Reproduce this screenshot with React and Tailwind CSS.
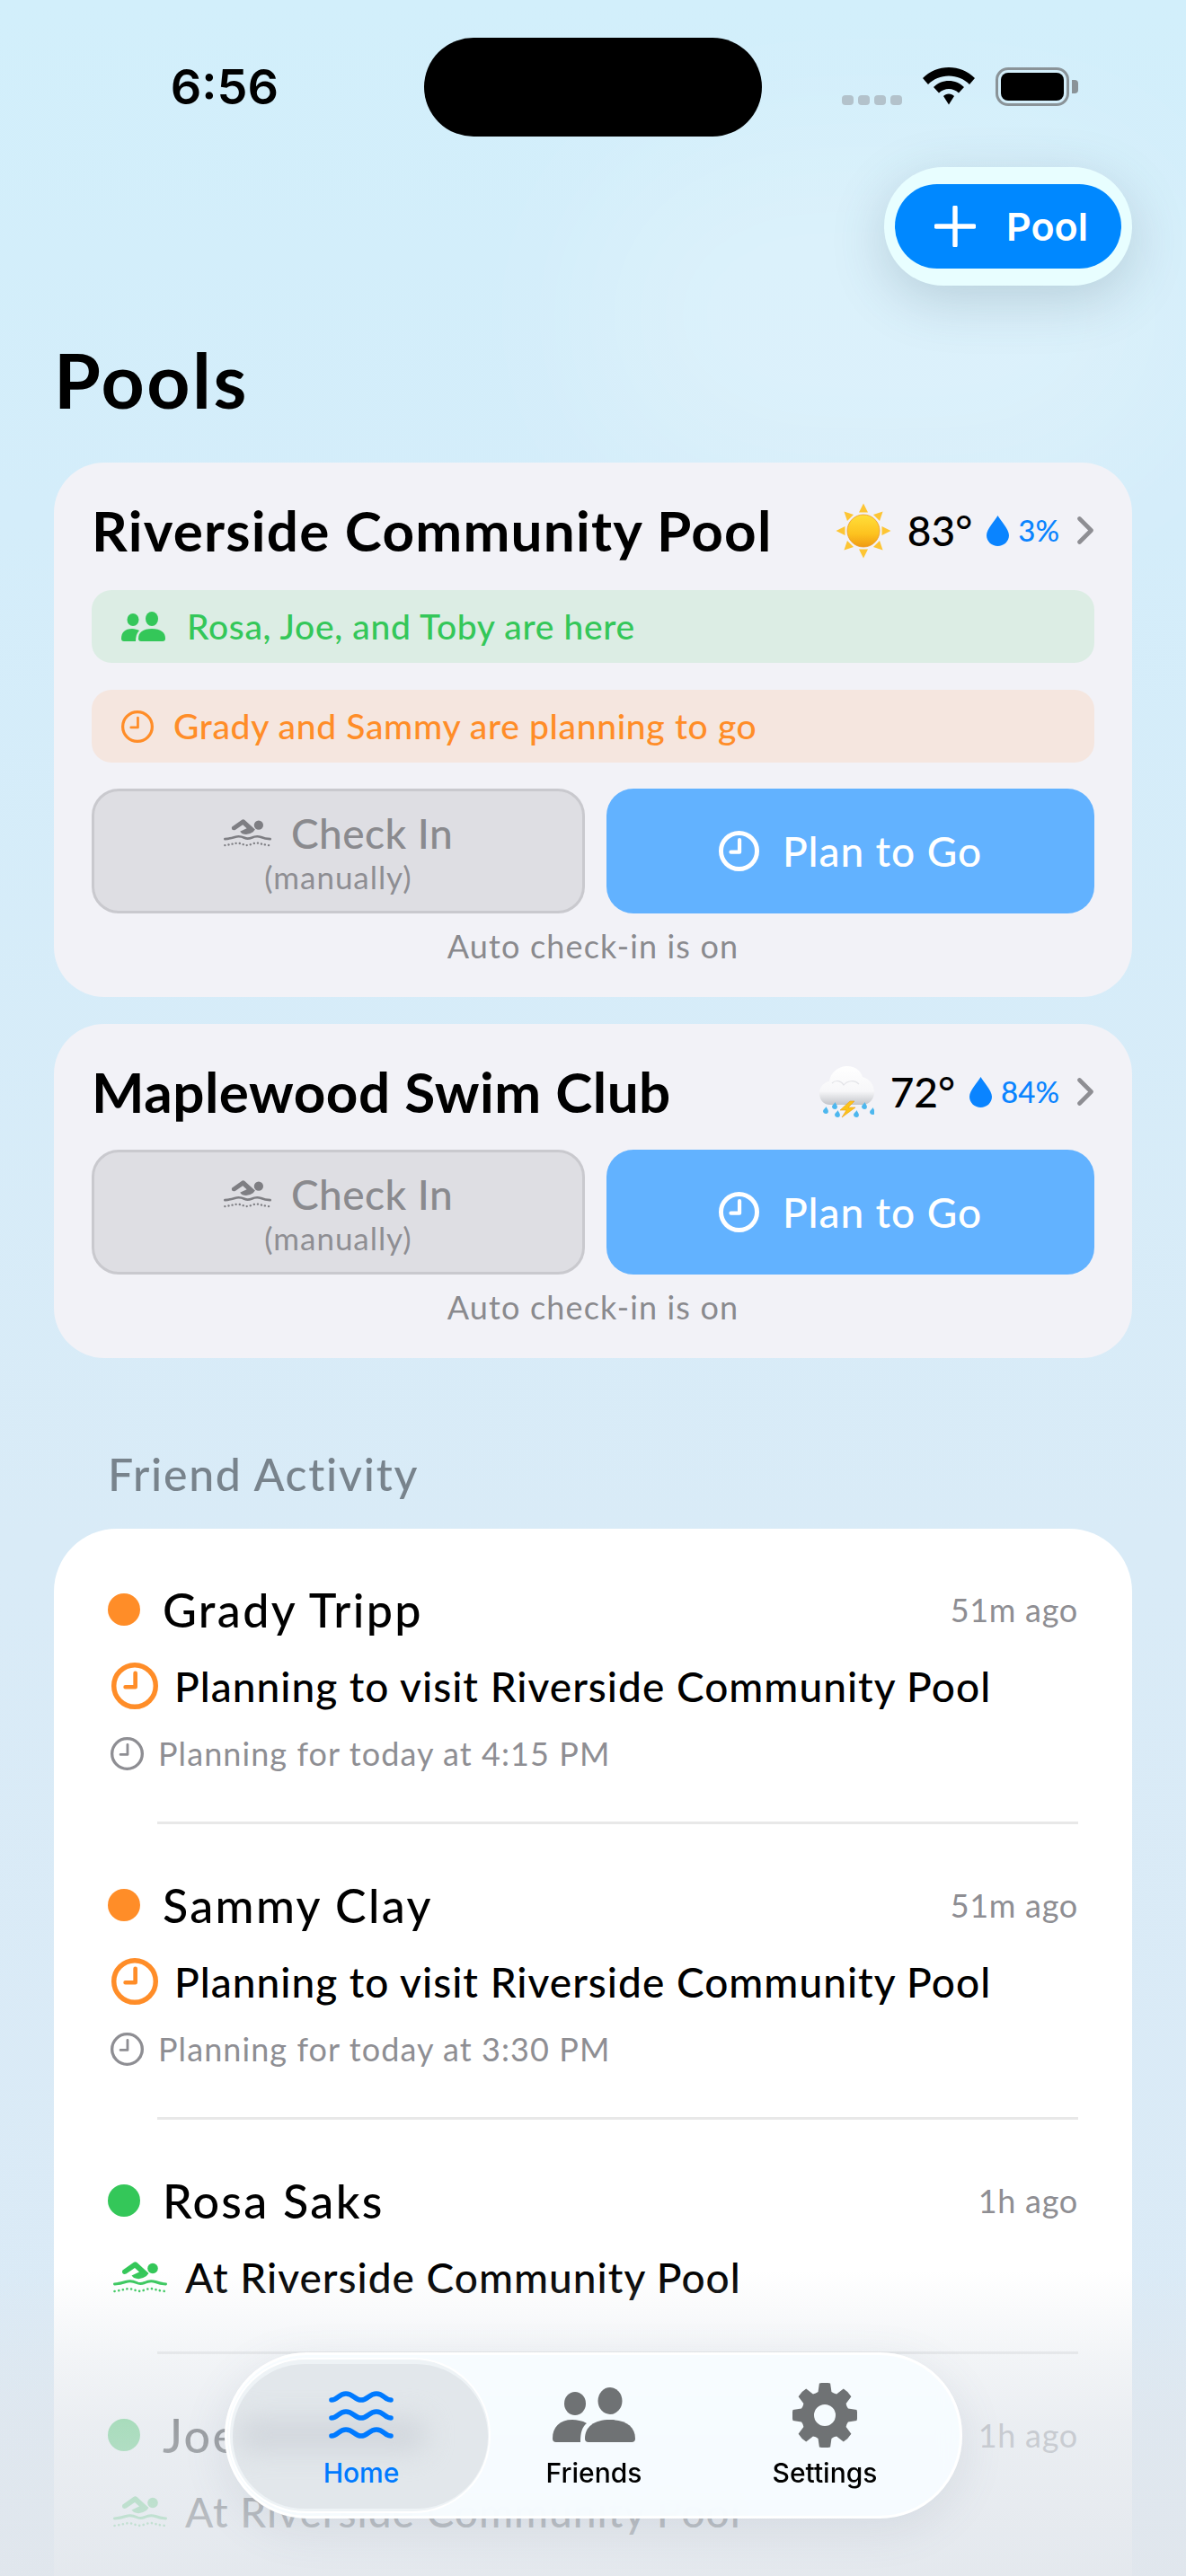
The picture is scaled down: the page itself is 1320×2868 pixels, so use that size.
import React from "react";

const QS = "[font-family:Lato,'Noto_Sans',sans-serif]";

function Clock({ size, color, sw }) {
  return (
    <svg width={size} height={size} viewBox="0 0 40 40" fill="none" className="shrink-0">
      <circle cx="20" cy="20" r={20 - sw / 2} stroke={color} strokeWidth={sw} />
      <path d="M20.5 9 V21 H12" stroke={color} strokeWidth={sw * 0.85} strokeLinecap="round" strokeLinejoin="round" />
    </svg>
  );
}

function Swim({ color, w = 53, h = 31, className = "" }) {
  return (
    <svg width={w} height={h} viewBox="0 0 60 35" fill="none" className={"shrink-0 " + className}>
      <circle cx="44" cy="7.500" r="5.800" fill={color} />
      <path d="M10.500 9.500 L22.500 1 Q24.500 -0.500 26.500 1 L39.500 13 L37 16 Q30 21 23 18 L20.500 15.500 L29 11.500 L24 7 L14.500 13.500 Q12 14.500 10.500 13 Q9.500 11 10.500 9.500 Z" fill={color} />
      <path d="M1.500 25 Q8 24.500 14 22.500 Q20 20.500 26 23.500 Q30 25.500 35 23.500 Q41 20.500 47 22.500 Q52 24.500 58.500 25" stroke={color} strokeWidth="3" strokeLinecap="round" />
      <path d="M1.500 33 Q8 32 14 30.500 Q20 29.500 26 32.500 Q30 33.500 35 31.500 Q41 29 47 31 Q52 32.500 58.500 33" stroke={color} strokeWidth="2.600" strokeLinecap="round" strokeDasharray="0.1 4.6" />
    </svg>
  );
}

function Drop({ w = 25, h = 34 }) {
  return (
    <svg width={w} height={h} viewBox="0 0 25 34" className="shrink-0">
      <path d="M12.500 0 C15 5 25 15 25 22 C25 29 19 34 12.500 34 C6 34 0 29 0 22 C0 15 10 5 12.500 0 Z" fill="#0a84ff" />
    </svg>
  );
}

function Chevron() {
  return (
    <svg width="18" height="31" viewBox="0 0 18 31" fill="none" className="shrink-0">
      <path d="M2.500 2.500 L15.500 15.500 L2.500 28.500" stroke="#8e8e93" strokeWidth="4.600" strokeLinecap="round" strokeLinejoin="round" />
    </svg>
  );
}

function Sun() {
  const rays = [0, 45, 90, 135, 180, 225, 270, 315];
  return (
    <svg width="62" height="62" viewBox="0 0 62 62" className="shrink-0">
      <defs>
        <linearGradient id="sung" x1="0" y1="0" x2="0" y2="1">
          <stop offset="0" stopColor="#ffdf3a" />
          <stop offset="0.6" stopColor="#fdc21f" />
          <stop offset="1" stopColor="#ef9a12" />
        </linearGradient>
      </defs>
      {rays.map((r) => (
        <path key={r} d="M31 0.500 L36 10.500 L26 10.500 Z" fill="#fdc534" transform={`rotate(${r} 31 31)`} />
      ))}
      <circle cx="31" cy="31" r="18" fill="url(#sung)" stroke="#ee9a2a" strokeWidth="0.8" />
    </svg>
  );
}

function Storm() {
  const d = [[4, 50], [14, 45], [17, 54], [38, 54], [47, 45], [56, 51]];
  return (
    <svg width="61" height="58" viewBox="0 0 61 58" className="shrink-0">
      <defs>
        <linearGradient id="cg" x1="0" y1="0" x2="0" y2="1">
          <stop offset="0" stopColor="#ffffff" />
          <stop offset="0.65" stopColor="#f7f7f9" />
          <stop offset="1" stopColor="#c3c5ca" />
        </linearGradient>
      </defs>
      <path d="M12 43 C4 43 0 37 0 30 C0 23 5 18 11 17 C12 8 20 0 31 0 C40 0 46 5 48 12 C56 14 61 21 61 29 C61 37 55 43 48 43 Z" fill="url(#cg)" />
      <path d="M14 19 C18 15 24 16 27 21 C31 16 39 15 44 20" fill="none" stroke="#e3e4e8" strokeWidth="1.2" />
      <path d="M34 39 L23 49 L30 49 L25 57 L40 46 L32 46 L39 39 Z" fill="#fcc419" stroke="#ee9a12" strokeWidth="0.6" />
      {d.map(([x, y], i) => (
        <path key={i} d={`M${x + 3.5} ${y - 5} C${x + 4} ${y - 3} ${x + 7} ${y - 1} ${x + 5.5} ${y + 2} C${x + 4} ${y + 4} ${x} ${y + 3} ${x} ${y} C${x} ${y - 2} ${x + 3} ${y - 3} ${x + 3.5} ${y - 5} Z`} fill="#4db7ee" />
      ))}
    </svg>
  );
}

function AlertBox({ bg, color, icon, text, gap }) {
  return (
    <div className={`h-[81px] rounded-[22px] flex items-center pl-[33px] ${bg} ${gap}`}>
      {icon}
      <span className={`${QS} font-medium text-[39px] tracking-[0.017em] ${color}`}>{text}</span>
    </div>
  );
}

function ActionButtons() {
  return (
    <div className="flex gap-6">
      <div className="flex-1 h-[139px] rounded-[30px] bg-[#dedee3] border-[3px] border-[#c9c9ce] flex flex-col items-center justify-center">
        <div className="flex items-center gap-[22px]">
          <Swim color="#7e7e83" />
          <span className={`${QS} font-medium text-[46px] tracking-[0.01em] leading-[56px] text-[#8a8a8e]`}>Check In</span>
        </div>
        <span className={`${QS} text-[35px] tracking-[0.027em] leading-[40px] text-[#8e8e93]`}>(manually)</span>
      </div>
      <div className="flex-1 h-[139px] rounded-[30px] bg-[#62b2ff] flex items-center justify-center gap-[26px]">
        <Clock size={45} color="#ffffff" sw={4.4} />
        <span className={`${QS} font-medium text-[46px] tracking-[0.02em] text-white`}>Plan to Go</span>
      </div>
    </div>
  );
}

function PoolCard({ name, icon, temp, rain, children, track, className = "" }) {
  return (
    <section className={`rounded-[56px] bg-[#f2f2f7] px-[42px] ${className}`}>
      <div className="h-[75px] flex items-center justify-between">
        <h2 className={`${QS} font-bold text-[62px] text-black ${track}`}>{name}</h2>
        <div className="flex items-center">
          {icon}
          <span className={`${QS} font-medium text-[46px] text-black ml-[18px]`}>{temp}</span>
          <span className="ml-[16px]"><Drop /></span>
          <span className={`${QS} font-medium text-[33px] text-[#0a84ff] ml-[10px]`}>{rain}</span>
          <span className="ml-[20px] mr-[1px]"><Chevron /></span>
        </div>
      </div>
      {children}
      <ActionButtons />
      <p className={`${QS} text-[36px] tracking-[0.032em] leading-[40px] mt-[16px] text-center text-[#8a8a8e]`}>Auto check-in is on</p>
    </section>
  );
}

function Entry({ dot, name, ago, icon, line, sub, last }) {
  return (
    <div className="pt-[60px]">
      <div className="h-[60px] pl-[60px] pr-[60px] flex items-center">
        <span className={`w-[36px] h-[36px] rounded-full shrink-0 ${dot}`} />
        <span className={`${QS} font-medium text-[52px] tracking-[0.045em] text-black ml-[25px]`}>{name}</span>
        <span className={`${QS} text-[36px] tracking-[0.02em] text-[#8e8e93] ml-auto`}>{ago}</span>
      </div>
      <div className={`h-[60px] mt-[25px] flex items-center ${sub ? "pl-[64px] gap-[18px]" : "pl-[66px] gap-[20px]"}`}>
        {icon}
        <span className={`${QS} font-medium text-[46px] tracking-[0.022em] text-black`}>{line}</span>
      </div>
      {sub && (
        <div className="h-[40px] mt-[25px] pl-[63px] flex items-center gap-[16px]">
          <Clock size={37} color="#8e8e93" sw={3.6} />
          <span className={`${QS} text-[36px] tracking-[0.03em] text-[#8e8e93]`}>{sub}</span>
        </div>
      )}
      {!last && <div className={`h-[3px] bg-[#e8e8e8] ml-[115px] mr-[60px] ${sub ? "mt-[56px]" : "mt-[53px]"}`} />}
    </div>
  );
}

function Waves() {
  const d = "M3 10 C10 10 11 3 19 3 C27 3 29 10 36 10 C43 10 45 3 53 3 C61 3 62 10 69 10";
  return (
    <svg width="72" height="54" viewBox="0 0 72 54" fill="none">
      <path d={d} stroke="#007aff" strokeWidth="5.600" strokeLinecap="round" />
      <path d={d} transform="translate(0 20)" stroke="#007aff" strokeWidth="5.600" strokeLinecap="round" />
      <path d={d} transform="translate(0 40)" stroke="#007aff" strokeWidth="5.600" strokeLinecap="round" />
    </svg>
  );
}

function People() {
  return (
    <svg width="93" height="62" viewBox="0 0 93 62" fill="#6f7274">
      <ellipse cx="25" cy="18" rx="12" ry="13" />
      <ellipse cx="64" cy="15" rx="13.500" ry="15" />
      <path d="M36 57 C36 44 46 36 64 36 C82 36 92 44 92 57 Q92 61 88 61 L40 61 Q36 61 36 57 Z" />
      <path d="M0 57 C0 44 8 36 22 36 C27 36 33 37 38 40 C33 44 31 50 31 61 L4 61 Q0 61 0 57 Z" />
    </svg>
  );
}

function gearPath() {
  const c = 36, R = 36, r = 27, n = 8;
  const p = (rad, a) => `${(c + rad * Math.sin(a)).toFixed(2)} ${(c - rad * Math.cos(a)).toFixed(2)}`;
  let s = "";
  for (let i = 0; i < n; i++) {
    const a = (i * 2 * Math.PI) / n;
    const h = 0.17, b = 0.28, v = Math.PI / n;
    s += `${i === 0 ? "M" : "L"}${p(r, a - b)} L${p(R, a - h)} Q${p(R + 1, a)} ${p(R, a + h)} L${p(r, a + b)} Q${p(r - 1, a + v)} ${p(r, a + 2 * v - b)} `;
  }
  return s + "Z M36 24 A12 12 0 1 0 36 48 A12 12 0 1 0 36 24 Z";
}

function Gear() {
  return (
    <svg width="72" height="72" viewBox="0 0 72 72">
      <path d={gearPath()} fill="#6f7274" fillRule="evenodd" />
    </svg>
  );
}

function Tab({ icon, label, color, className = "" }) {
  return (
    <div className={`flex flex-col items-center ${className}`}>
      <div className="h-[72px] flex items-center justify-center">{icon}</div>
      <span className={`font-['Inter',sans-serif] font-medium text-[30px] leading-[36px] mt-[10px] ${color}`}>{label}</span>
    </div>
  );
}

export default function App() {
  return (
    <div className="relative w-[1320px] h-[2868px] overflow-hidden bg-[linear-gradient(180deg,#d2effb_0%,#d4edfa_20%,#d9ebf7_60%,#dbeaf6_100%)]">
      <div className="absolute left-[650px] top-[150px] w-[670px] h-[400px] rounded-full bg-white/20 blur-[90px]" />
      <div className="relative px-[60px]">
        {/* status bar */}
        <div className="h-[186px] -mx-[60px] flex items-start">
          <span className="font-['Inter',sans-serif] font-semibold text-[54px] leading-[64px] text-black w-[310px] text-right mt-[65px]">6:56</span>
          <div className="w-[376px] h-[110px] rounded-[55px] bg-black mt-[42px] ml-[162px]" />
          <div className="flex gap-[5px] mt-[106px] ml-[89px]">
            {[0, 1, 2, 3].map((i) => <span key={i} className="w-[13px] h-[11px] rounded-[4px] bg-[#b3c2cb]" />)}
          </div>
          <svg width="58" height="42" viewBox="0 0 58 42" className="mt-[75px] ml-[23px]">
            <path d="M29 0 C40 0 50 4 58 12 L52 19 C46 13 38 9.500 29 9.500 C20 9.500 12 13 6 19 L0 12 C8 4 18 0 29 0 Z M29 15 C35.500 15 41.500 17.500 46 22 L40 28.500 C37 25.500 33 24 29 24 C25 24 21 25.500 18 28.500 L12 22 C16.500 17.500 22.500 15 29 15 Z M29 29.500 C31.500 29.500 33.500 30.500 35 32 L29 41.500 L23 32 C24.500 30.500 26.500 29.500 29 29.500 Z" fill="#000" />
          </svg>
          <div className="mt-[75px] ml-[23px] flex items-center">
            <div className="w-[82px] h-[43px] rounded-[14px] border-[3px] border-[#8a9398] p-[3px]">
              <div className="w-full h-full rounded-[8px] bg-black" />
            </div>
            <div className="w-[7px] h-[15px] rounded-r-[4px] bg-[#8a9398] ml-[3px]" />
          </div>
        </div>

        {/* add pool */}
        <div className="flex justify-end">
          <div className="w-[276px] h-[132px] rounded-[66px] bg-[#e8feff] flex items-center justify-center shadow-[0_16px_60px_rgba(60,90,110,0.22)]">
            <div className="w-[252px] h-[94px] rounded-[47px] bg-[#0088ff] flex items-center pl-[44px] gap-[34px]">
              <svg width="46" height="46" viewBox="0 0 46 46"><path d="M23 2 V44 M2 23 H44" stroke="#fff" strokeWidth="5.400" strokeLinecap="round" /></svg>
              <span className="font-['Inter',sans-serif] font-semibold text-[43px] text-white">Pool</span>
            </div>
          </div>
        </div>

        <h1 className={`${QS} font-bold text-[84px] tracking-[0.03em] leading-[100px] text-black mt-[55px]`}>Pools</h1>

        <PoolCard name="Riverside Community Pool" track="tracking-[0.02em]" icon={<Sun />} temp="83°" rain="3%" className="mt-[42px] pt-[38px] h-[595px]">
          <div className="mt-[29px] flex flex-col gap-[30px] mb-[29px]">
            <AlertBox
              bg="bg-[#dcede4]"
              color="text-[#34c759]"
              gap="gap-[24px]"
              text="Rosa, Joe, and Toby are here"
              icon={
                <svg width="49" height="33" viewBox="0 0 49 33" fill="#34c759" className="shrink-0">
                  <ellipse cx="13" cy="9" rx="6.500" ry="7" />
                  <ellipse cx="34" cy="8" rx="7" ry="8" />
                  <path d="M19 30 C19 23 24 19 34 19 C44 19 49 23 49 30 Q49 33 46 33 L22 33 Q19 33 19 30 Z" />
                  <path d="M0 30 C0 23 4 19 12 19 C15 19 18 20 20 21 C17 24 16 28 16 33 L3 33 Q0 33 0 30 Z" />
                </svg>
              }
            />
            <AlertBox
              bg="bg-[#f5e6df]"
              color="text-[#ff8d28]"
              gap="gap-[22px]"
              text="Grady and Sammy are planning to go"
              icon={<Clock size={36} color="#ff8d28" sw={3.6} />}
            />
          </div>
        </PoolCard>

        <PoolCard name="Maplewood Swim Club" track="tracking-[0.008em]" icon={<Storm />} temp="72°" rain="84%" className="mt-[30px] pt-[38px] h-[372px]">
          <div className="h-[27px]" />
        </PoolCard>

        <h3 className={`${QS} font-medium text-[50px] tracking-[0.035em] leading-[60px] text-[#78838c] ml-[60px] mt-[99px]`}>Friend Activity</h3>

        <section className="mt-[31px] rounded-t-[70px] bg-white h-[1200px]">
          <Entry dot="bg-[#ff8d28]" name="Grady Tripp" ago="51m ago" icon={<Clock size={52} color="#ff8d28" sw={4.2} />} line="Planning to visit Riverside Community Pool" sub="Planning for today at 4:15 PM" />
          <Entry dot="bg-[#ff8d28]" name="Sammy Clay" ago="51m ago" icon={<Clock size={52} color="#ff8d28" sw={4.2} />} line="Planning to visit Riverside Community Pool" sub="Planning for today at 3:30 PM" />
          <Entry dot="bg-[#34c759]" name="Rosa Saks" ago="1h ago" icon={<Swim color="#34c759" w={60} h={35} />} line="At Riverside Community Pool" />
          <Entry dot="bg-[#34c759]" name="Joe" ago="1h ago" icon={<Swim color="#34c759" w={60} h={35} />} line="At Riverside Community Pool" last />
        </section>
      </div>

      {/* bottom fade */}
      <div className="absolute left-0 right-0 bottom-0 h-[340px] pointer-events-none bg-[linear-gradient(180deg,rgba(225,230,236,0)_0%,rgba(225,230,236,0.45)_30%,rgba(225,230,236,0.68)_50%,rgba(225,230,236,0.9)_100%)]" />

      {/* tab bar */}
      <nav className="absolute left-[250px] top-[2619px] w-[821px] h-[185px] rounded-[92px] bg-[#f7fcff]/95 backdrop-blur-md border-[3px] border-white shadow-[0_12px_50px_rgba(90,110,130,0.12)]">
        <div className="absolute left-[1px] top-[3px] w-[292px] h-[173px] rounded-[86px] border-[2px] border-white bg-[#eef3f6]" />
        <div className="absolute left-[6px] top-[10px] w-[284px] h-[161px] rounded-[80px] bg-[#e2e7eb] overflow-hidden">
          <div className="absolute left-[4px] top-[60px] w-[212px] h-[38px] rounded-full bg-[#d2d7dd] blur-[14px]" />
        </div>
        <Tab className="absolute left-[99px] top-[31px] w-[100px]" icon={<Waves />} label="Home" color="text-[#007aff]" />
        <Tab className="absolute left-[348px] top-[31px] w-[120px]" icon={<People />} label="Friends" color="text-black" />
        <Tab className="absolute left-[605px] top-[31px] w-[120px]" icon={<Gear />} label="Settings" color="text-black" />
      </nav>
    </div>
  );
}
